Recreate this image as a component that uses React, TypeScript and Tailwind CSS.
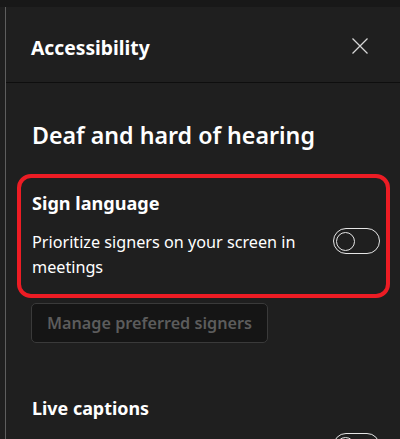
export default function App() {
  return (
    <div className="w-[400px] h-[439px] overflow-hidden bg-[#181818] font-['Noto_Sans',sans-serif] text-white">
      <div className="h-[7px] bg-[#181818]" />
      <div className="flex h-[432px]">
        {/* left divider */}
        <div className="w-[5px] shrink-0 bg-[#1f1f1f]" />
        <div className="w-px shrink-0 bg-[#5e5e5e]" />
        <div className="flex-1 min-w-0 bg-[#1f1f1f] flex flex-col overflow-hidden">
          {/* header */}
          <div className="h-[76px] shrink-0 flex items-start justify-between pl-[25px] pr-[32px] pt-[31px] border-b border-[#0e0e0e]">
            <h1 className="text-[19.3px] font-bold leading-[19px]">Accessibility</h1>
            <button className="w-[16px] h-[16px] flex items-center justify-center text-[#d6d6d6]">
              <svg width="16" height="16" viewBox="0 0 16 16" fill="none" stroke="currentColor" strokeWidth="1.25">
                <path d="M0.5 0.5l15 15M15.5 0.5l-15 15" />
              </svg>
            </button>
          </div>

          <div className="shrink-0 pl-[26px] pr-[20px] pt-[38px]">
            <h2 className="text-[23.2px] font-semibold leading-[28px]">Deaf and hard of hearing</h2>

            {/* highlighted setting */}
            <div className="mt-[25px] ml-[-15px] mr-[-10px] border-[4px] border-[#ec1c24] rounded-[14px] pl-[11px] pr-[6px] pt-[13px] pb-[15px]">
              <h3 className="text-[18.1px] font-bold leading-[24px]">Sign language</h3>
              <div className="mt-[15px] flex items-start justify-between">
                <p className="text-[16.2px] leading-[24.5px] w-[290px]">
                  Prioritize signers on your screen in meetings
                </p>
                <div className="mt-[-2px] w-[47px] h-[26px] shrink-0 rounded-full border border-[#e6e6e6] flex items-center px-[2px]">
                  <div className="w-[19px] h-[19px] rounded-full border-[1.5px] border-[#e6e6e6]" />
                </div>
              </div>
            </div>

            <button
              disabled
              className="mt-[5px] ml-[-1px] h-[40px] w-[237px] rounded-[5px] border border-[#3a3a3a] bg-[#151515] text-[#5c5c5c] text-[16.2px] font-semibold"
            >
              Manage preferred signers
            </button>

            <h3 className="mt-[53px] text-[17.9px] font-bold leading-[24px]">Live captions</h3>
            <div className="mt-[13px] flex justify-end">
              <div className="w-[47px] h-[26px] rounded-full border border-[#e6e6e6] flex items-center px-[2px]">
                <div className="w-[19px] h-[19px] rounded-full border-[1.5px] border-[#e6e6e6]" />
              </div>
            </div>
          </div>
        </div>
      </div>
    </div>
  );
}
